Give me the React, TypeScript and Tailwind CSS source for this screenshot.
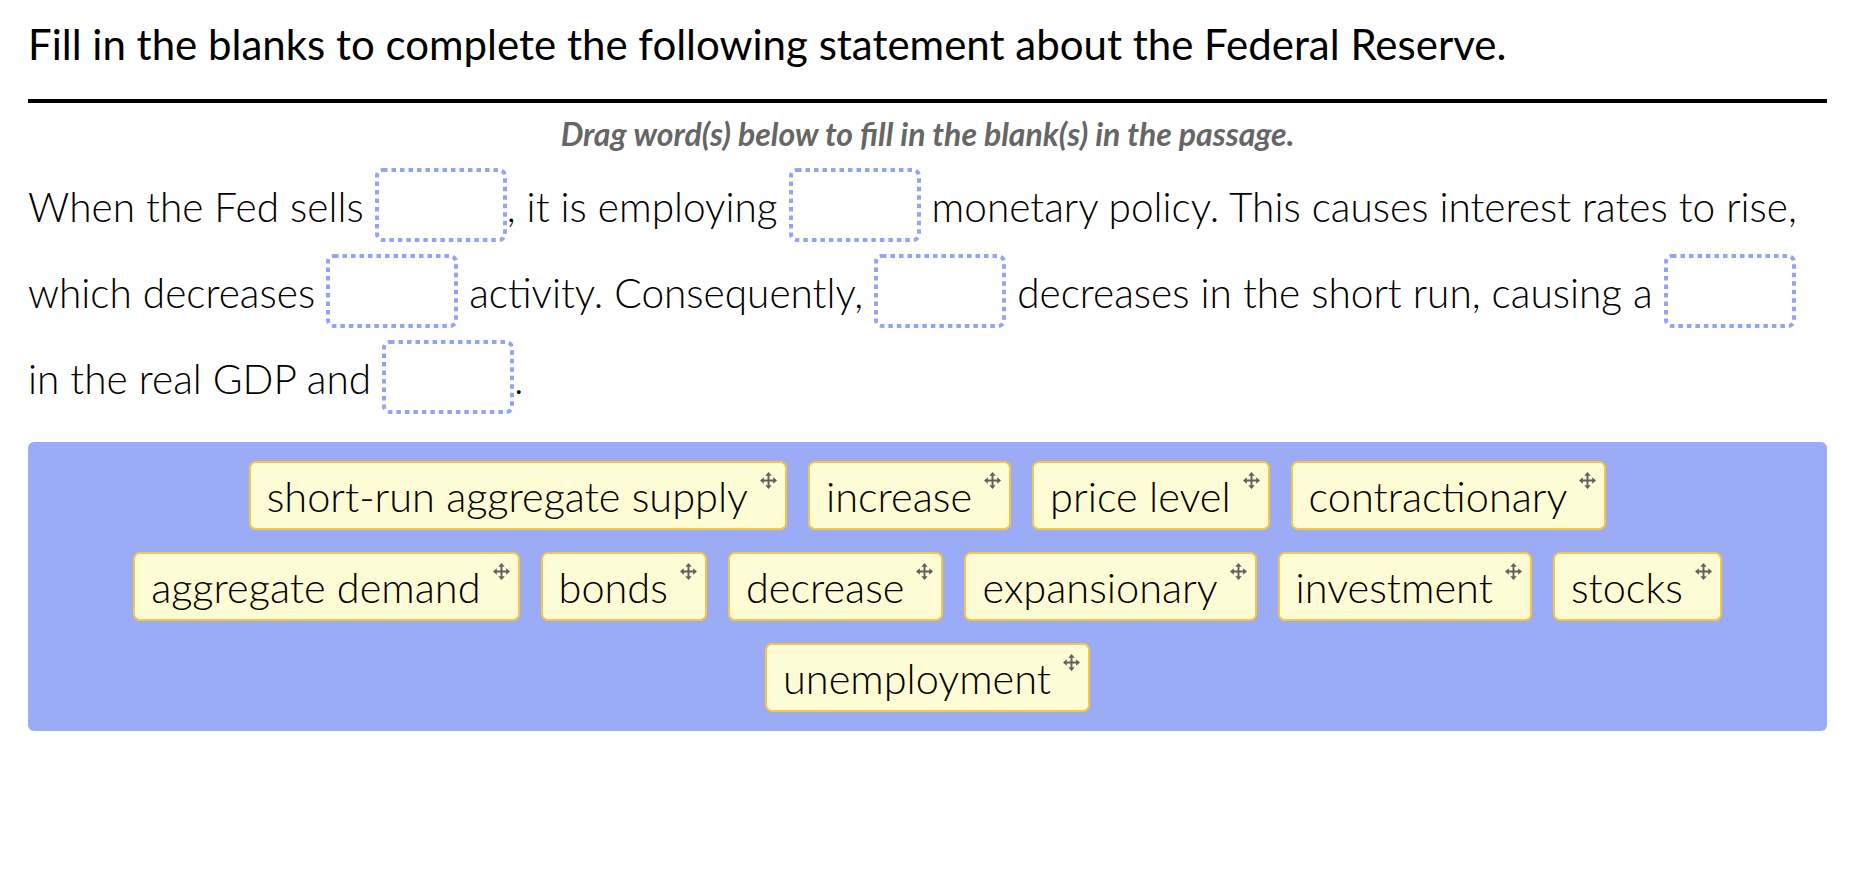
import type { ReactNode } from 'react';

const WORDS = [
  'short-run aggregate supply',
  'increase',
  'price level',
  'contractionary',
  'aggregate demand',
  'bonds',
  'decrease',
  'expansionary',
  'investment',
  'stocks',
  'unemployment',
];

function MoveIcon() {
  return (
    <svg width="17" height="17" viewBox="0 0 16 16" className="shrink-0 text-[#5f5f5f]" aria-hidden>
      <path d="M8 3v10M3 8h10" stroke="currentColor" strokeWidth="1.8" />
      <path d="M8 0 11 3.6H5Z M8 16 11 12.4H5Z M0 8 3.6 5V11Z M16 8 12.4 5V11Z" fill="currentColor" />
    </svg>
  );
}

// drop target, dotted outline drawn as svg so the dots come out square
function Blank() {
  return (
    <span className="relative inline-block w-[132px] h-[74px] align-[-20px]">
      <svg className="absolute inset-0 w-full h-full" aria-hidden>
        <rect
          x="2"
          y="2"
          width="128"
          height="70"
          rx="6"
          fill="none"
          stroke="#93a3f6"
          strokeWidth="4"
          strokeDasharray="4.5 4"
        />
      </svg>
    </span>
  );
}

function Chip({ children }: { children: ReactNode }) {
  return (
    <div className="flex items-start h-[69px] rounded-[7px] border-2 border-[#f5c842] bg-[#fefcd4] pl-[16px] pr-[8px] cursor-move">
      <span className="mt-[8px] leading-[50px]">{children}</span>
      <span className="ml-[12px] mt-[9px]">
        <MoveIcon />
      </span>
    </div>
  );
}

export default function App() {
  return (
    <div className="min-h-screen bg-white pl-[28px] pr-[39px] text-black font-['Lato',sans-serif]">
      <h1 className="pt-[19px] text-[42px] leading-[50px] font-normal">
        Fill in the blanks to complete the following statement about the Federal Reserve.
      </h1>
      <div className="mt-[30px] h-[4px] bg-black" />
      <p className="mt-[14px] text-center text-[32px] leading-[34px] font-bold italic text-[#666]">
        Drag word(s) below to fill in the blank(s) in the passage.
      </p>
      <p className="mt-[13px] pr-[10px] text-[40.6px] leading-[86px] font-light">
        When the Fed sells <Blank />, it is employing <Blank /> monetary policy. This causes interest rates to
        rise, which decreases <Blank /> activity. Consequently, <Blank /> decreases in the short run, causing a{' '}
        <Blank /> in the real GDP and <Blank />.
      </p>
      <div className="mt-[20px] rounded-[6px] bg-[#9babf6] px-[60px] py-[19px] flex flex-wrap justify-center gap-x-[21px] gap-y-[22px] text-[41.5px] font-light">
        {WORDS.map((w) => (
          <Chip key={w}>{w}</Chip>
        ))}
      </div>
    </div>
  );
}
